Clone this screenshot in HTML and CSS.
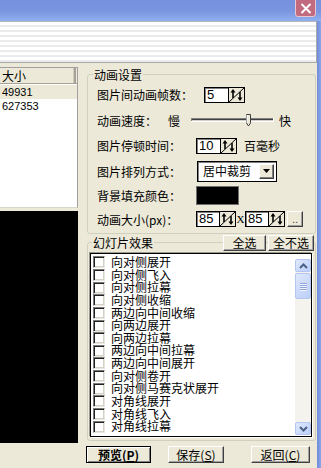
FILE: index.html
```html
<!DOCTYPE html>
<html lang="zh-CN">
<head>
<meta charset="utf-8">
<title>动画设置</title>
<link rel="stylesheet" href="styles.css">
</head>
<body>
<div class="window">
  <div class="titlebar">
    <div class="close">
      <svg width="12" height="11" viewBox="0 0 12 11"><path d="M1.5 1 L10.5 10 M10.5 1 L1.5 10" stroke="#fff" stroke-width="2" fill="none"/></svg>
    </div>
  </div>
  <div class="frame">
    <div class="client">
      <div class="rebar"></div>
      <div class="body">
        <div class="left">
          <div class="filelist">
            <div class="lv-head"><span class="lv-col">大小</span></div>
            <div class="lv-row sel">49931</div>
            <div class="lv-row">627353</div>
          </div>
          <div class="preview"></div>
        </div>
        <div class="right">
          <div class="group g1">
            <div class="ghead"><span class="gtitle">动画设置</span></div>
            <div class="grows">
              <div class="row r1">
                <span class="lab lab-wide">图片间动画帧数：</span>
                <span class="num">5</span>
                <svg class="spin" width="17" height="16" viewBox="0 0 17 16"><rect x="0.5" y="0.5" width="16" height="15" fill="#ece9d8" stroke="#000"/><path d="M1 15 L16 1" stroke="#000" stroke-width="1"/><path d="M5 4 V11" stroke="#000" stroke-width="1.6"/><path d="M2.5 5.5 L5 2 L7.5 5.5 Z" fill="#000"/><path d="M12 5 V12" stroke="#000" stroke-width="1.6"/><path d="M9.5 10.5 L12 14 L14.5 10.5 Z" fill="#000"/></svg>
              </div>
              <div class="row r2">
                <span class="lab lab-speed">动画速度：</span>
                <span class="slow">慢</span>
                <svg class="slider" width="84" height="13" viewBox="0 0 84 13"><rect x="0" y="4" width="83" height="1" fill="#808080"/><rect x="0" y="4" width="1" height="4" fill="#808080"/><rect x="1" y="5" width="81" height="1" fill="#404040"/><rect x="1" y="6" width="81" height="1" fill="#d4d0c8"/><rect x="0" y="7" width="83" height="1" fill="#fff"/><rect x="82" y="4" width="1" height="4" fill="#fff"/><path d="M55.5 0.5 H59.5 V9 L57.5 12 L55.5 9 Z" fill="#ece9d8" stroke="#404040"/><path d="M56 1 V9" stroke="#fff"/></svg>
                <span class="fast">快</span>
              </div>
              <div class="row r3">
                <span class="lab">图片停顿时间：</span>
                <span class="num">10</span>
                <svg class="spin" width="17" height="16" viewBox="0 0 17 16"><rect x="0.5" y="0.5" width="16" height="15" fill="#ece9d8" stroke="#000"/><path d="M1 15 L16 1" stroke="#000" stroke-width="1"/><path d="M5 4 V11" stroke="#000" stroke-width="1.6"/><path d="M2.5 5.5 L5 2 L7.5 5.5 Z" fill="#000"/><path d="M12 5 V12" stroke="#000" stroke-width="1.6"/><path d="M9.5 10.5 L12 14 L14.5 10.5 Z" fill="#000"/></svg>
                <span class="unit">百毫秒</span>
              </div>
              <div class="row r4">
                <span class="lab">图片排列方式：</span>
                <div class="combo">
                  <span class="combo-text">居中裁剪</span>
                  <span class="combo-btn"><svg width="7" height="4" viewBox="0 0 7 4"><path d="M0 0 H7 L3.5 4 Z" fill="#000"/></svg></span>
                </div>
              </div>
              <div class="row r5">
                <span class="lab">背景填充颜色：</span>
                <span class="swatch"></span>
              </div>
              <div class="row r6">
                <span class="lab">动画大小(px)：</span>
                <span class="num n6">85</span>
                <svg class="spin" width="17" height="16" viewBox="0 0 17 16"><rect x="0.5" y="0.5" width="16" height="15" fill="#ece9d8" stroke="#000"/><path d="M1 15 L16 1" stroke="#000" stroke-width="1"/><path d="M5 4 V11" stroke="#000" stroke-width="1.6"/><path d="M2.5 5.5 L5 2 L7.5 5.5 Z" fill="#000"/><path d="M12 5 V12" stroke="#000" stroke-width="1.6"/><path d="M9.5 10.5 L12 14 L14.5 10.5 Z" fill="#000"/></svg>
                <span class="times">X</span>
                <span class="num n6">85</span>
                <svg class="spin" width="17" height="16" viewBox="0 0 17 16"><rect x="0.5" y="0.5" width="16" height="15" fill="#ece9d8" stroke="#000"/><path d="M1 15 L16 1" stroke="#000" stroke-width="1"/><path d="M5 4 V11" stroke="#000" stroke-width="1.6"/><path d="M2.5 5.5 L5 2 L7.5 5.5 Z" fill="#000"/><path d="M12 5 V12" stroke="#000" stroke-width="1.6"/><path d="M9.5 10.5 L12 14 L14.5 10.5 Z" fill="#000"/></svg>
                <span class="btn dots">..</span>
              </div>
            </div>
          </div>

          <div class="group g2">
            <div class="ghead">
              <span class="gtitle">幻灯片效果</span>
              <span class="spacer"></span>
              <span class="btn sbtn all">全选</span>
              <span class="btn sbtn none">全不选</span>
            </div>
            <div class="listbox">
              <div class="items">
                <div class="item"><span class="cb"></span>向对侧展开</div>
                <div class="item"><span class="cb"></span>向对侧飞入</div>
                <div class="item"><span class="cb"></span>向对侧拉幕</div>
                <div class="item"><span class="cb"></span>向对侧收缩</div>
                <div class="item"><span class="cb"></span>两边向中间收缩</div>
                <div class="item"><span class="cb"></span>向两边展开</div>
                <div class="item"><span class="cb"></span>向两边拉幕</div>
                <div class="item"><span class="cb"></span>两边向中间拉幕</div>
                <div class="item"><span class="cb"></span>两边向中间展开</div>
                <div class="item"><span class="cb"></span>向对侧卷开</div>
                <div class="item"><span class="cb"></span>向对侧马赛克状展开</div>
                <div class="item"><span class="cb"></span>对角线展开</div>
                <div class="item"><span class="cb"></span>对角线飞入</div>
                <div class="item"><span class="cb"></span>对角线拉幕</div>
              </div>
              <div class="vscroll">
                <div class="sb-btn"><svg width="9" height="6" viewBox="0 0 9 6"><path d="M1 5 L4.5 1.5 L8 5" stroke="#4d6185" stroke-width="2" fill="none"/></svg></div>
                <div class="sb-thumb"><span class="grip"></span><span class="grip"></span><span class="grip"></span><span class="grip"></span></div>
                <div class="sb-track"></div>
                <div class="sb-btn"><svg width="9" height="6" viewBox="0 0 9 6"><path d="M1 1 L4.5 4.5 L8 1" stroke="#4d6185" stroke-width="2" fill="none"/></svg></div>
              </div>
            </div>
          </div>

          <div class="actions">
            <span class="btn abtn default b-preview">预览(<u>P</u>)</span>
            <span class="btn abtn b-save">保存(<u>S</u>)</span>
            <span class="btn abtn b-back">返回(<u>C</u>)</span>
          </div>
        </div>
      </div>
    </div>
    <div class="edge"></div>
  </div>
</div>
</body>
</html>
```

FILE: styles.css
```css
* { box-sizing: border-box; margin: 0; padding: 0; }
html, body { width: 321px; height: 468px; overflow: hidden; }
body {
  font-family: "Noto Sans CJK SC", "Noto Sans", sans-serif;
  font-size: 12px;
  color: #000;
  background: #ece9d8;
}
.window { width: 321px; height: 468px; display: flex; flex-direction: column; }

.titlebar {
  height: 21px;
  flex: none;
  background: linear-gradient(#7590dd, #7b96e0 55%, #8fb0f0);
  display: flex;
  justify-content: flex-end;
  align-items: flex-start;
  padding-right: 5px;
}
.close {
  width: 21px;
  height: 19px;
  margin-top: -2px;
  background: #c26b7e;
  border: 1px solid #e9c6d2;
  border-radius: 0 0 3px 3px;
  display: flex;
  align-items: center;
  justify-content: center;
  padding-top: 2px;
}

.frame { flex: 1; display: flex; min-height: 0; }
.client { width: 317px; display: flex; flex-direction: column; }
.edge { width: 4px; background: linear-gradient(90deg, #6f8bdc, #8aa6e8); }

.rebar {
  height: 42px;
  flex: none;
  border-top: 1px solid #b4b4b4;
  border-bottom: 1px solid #a9a9a9;
  border-right: 1px solid #a9a9a9;
  background: repeating-linear-gradient(#ffffff 0 3px, #ebebeb 3px 5px);
}

.body { flex: 1; display: flex; min-height: 0; }

/* left column */
.left { width: 78px; flex: none; display: flex; flex-direction: column; padding-top: 4px; }
.filelist {
  height: 141px;
  background: #fff;
  border-top: 1px solid #a0a0a0;
  border-right: 1px solid #a0a0a0;
  border-bottom: 1px solid #d8d6c8;
  font-family: "Liberation Sans", sans-serif;
  font-size: 11px;
}
.lv-head {
  height: 16px;
  background: #ece9d8;
  border-bottom: 1px solid #a5a396;
  display: flex;
}
.lv-col {
  width: 76px;
  padding-left: 2px;
  font-family: "Noto Sans CJK SC", sans-serif;
  font-size: 12px;
  line-height: 15px;
  border-right: 2px solid #a5a396;
  box-shadow: inset -1px 0 0 #d0cdbd;
}
.lv-row { height: 14px; line-height: 14px; padding-left: 2px; }
.lv-row.sel { background: #ece9d8; margin-top: 1px; }
.preview { margin-top: 3px; height: 232px; background: #000; }

/* right column */
.right { width: 230px; margin-left: 9px; display: flex; flex-direction: column; }
.group {
  border: 1px solid #d0d0bf;
  border-radius: 3px;
  width: 229px;
}
.g1 { margin-top: 11px; height: 160px; }
.g2 { margin-top: 8px; height: 199px; display: flex; flex-direction: column; }
.ghead {
  margin-top: -8px;
  height: 15px;
  display: flex;
  align-items: center;
  padding-left: 4px;
}
.g1 .ghead { padding-left: 5px; }
.gtitle { background: #ece9d8; padding: 0 1px; line-height: 15px; }
.spacer { flex: 1; }

.grows {
  display: grid;
  grid-template-rows: 25px 27px 23px 28px 21px 26px;
  padding-left: 9px;
}
.row { display: flex; align-items: center; }
.lab { width: 99px; flex: none; white-space: nowrap; }
.lab-wide { width: 107px; }
.lab-speed { width: 71px; }

.num {
  height: 16px;
  width: 24px;
  background: #fff;
  border: 1px solid #000;
  border-right: none;
  box-shadow: inset 1px 1px 0 #808080;
  font-family: "Liberation Sans", sans-serif;
  font-size: 13px;
  line-height: 14px;
  padding-left: 2px;
}
.n6 { width: 23px; }
.spin { flex: none; display: block; }
.slow { width: 12px; }
.slider { margin-left: 11px; display: block; }
.fast { margin-left: 4px; }
.unit { margin-left: 7px; }

.combo {
  width: 80px;
  height: 21px;
  margin-left: 1px;
  background: #fff;
  border: 1px solid #000;
  box-shadow: inset 1px 1px 0 #808080;
  display: flex;
  align-items: center;
  padding: 0 2px 0 5px;
}
.combo-text { flex: 1; line-height: 14px; }
.combo-btn {
  width: 15px;
  height: 15px;
  background: #ece9d8;
  border: 1px solid;
  border-color: #fff #404040 #404040 #fff;
  box-shadow: inset -1px -1px 0 #808080;
  display: flex;
  align-items: center;
  justify-content: center;
}
.swatch {
  width: 43px;
  height: 19px;
  background: #000;
  border: 1px solid #707070;
  box-shadow: 0 0 0 1px #ffffff inset;
  box-shadow: none;
}
.times {
  font-family: "Liberation Serif", serif;
  font-size: 11px;
  width: 9px;
  text-align: center;
}

.btn {
  background: #ece9d8;
  border: 1px solid;
  border-color: #fff #404040 #404040 #fff;
  box-shadow: inset -1px -1px 0 #a0a0a0;
  display: flex;
  align-items: center;
  justify-content: center;
  white-space: nowrap;
}
.dots {
  width: 16px;
  height: 16px;
  margin-left: 2px;
  font-family: "Liberation Sans", sans-serif;
  font-size: 11px;
  line-height: 10px;
  color: #444;
}
.sbtn { height: 16px; line-height: 14px; }
.all { width: 43px; }
.none { width: 46px; margin-left: 2px; margin-right: 1px; }

.listbox {
  margin: 3px 3px 0 2px;
  height: 184px;
  border: 1px solid #000;
  box-shadow: -1px -1px 0 #9a9a90, 1px 1px 0 #fff;
  background: #fff;
  display: flex;
  overflow: hidden;
}
.items { flex: 1; padding: 2px 0 0 2px; overflow: hidden; }
.item {
  height: 12.65px;
  line-height: 12.65px;
  display: flex;
  align-items: center;
  white-space: nowrap;
}
.cb {
  width: 12px;
  height: 12px;
  flex: none;
  margin-right: 6px;
  background: #fff;
  border: 1px solid;
  border-color: #7a7a7a #e8e8e0 #e8e8e0 #7a7a7a;
  box-shadow: inset 1px 1px 0 #202020, inset -1px -1px 0 #d4d0c8;
}

.vscroll {
  width: 16px;
  flex: none;
  margin: 5px 0 1px;
  display: flex;
  flex-direction: column;
  background: #f4f3ee;
}
.sb-btn, .sb-thumb {
  background: linear-gradient(135deg, #dfe8fd, #bccff8);
  border: 1px solid #b3c5f0;
  border-radius: 2px;
  display: flex;
  align-items: center;
  justify-content: center;
}
.sb-btn { height: 13px; }
.sb-thumb {
  height: 26px;
  margin-top: 1px;
  flex-direction: column;
  gap: 1px;
}
.grip { width: 7px; height: 1px; background: #8ea5de; box-shadow: 0 1px 0 #eef3fe; }
.sb-track { flex: 1; }

.actions { margin-top: 5px; height: 17px; display: flex; }
.abtn { height: 17px; }
.b-preview { width: 65px; margin-left: -1px; font-weight: bold; }
.default { border: 1px solid #000; box-shadow: inset 1px 1px 0 #fff, inset -1px -1px 0 #808080; }
.b-save { width: 56px; margin-left: 17px; }
.b-back { width: 59px; margin-left: 27px; }
u { text-decoration: underline; }
```
